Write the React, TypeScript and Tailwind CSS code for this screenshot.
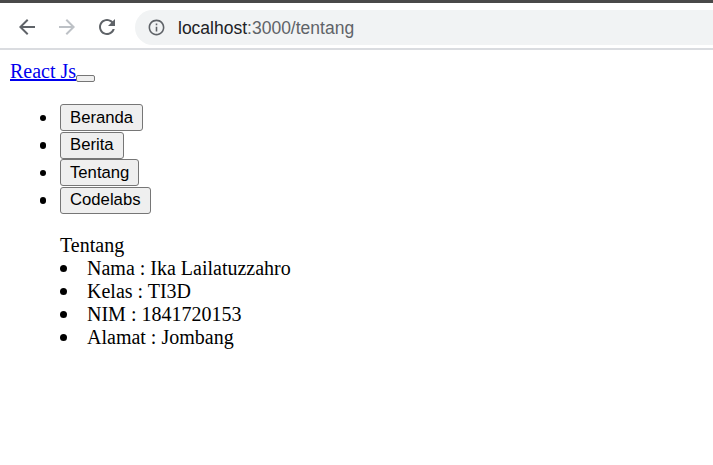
import React from "react";

const NAV = ["Beranda", "Berita", "Tentang", "Codelabs"];

const BIODATA = [
  "Nama : Ika Lailatuzzahro",
  "Kelas : TI3D",
  "NIM : 1841720153",
  "Alamat : Jombang",
];

function Icon({ d, className }: { d: string; className?: string }) {
  return (
    <svg viewBox="0 0 24 24" className={className} fill="currentColor">
      <path d={d} />
    </svg>
  );
}

function BrowserBar() {
  return (
    <div className="bg-white">
      <div className="h-[3px] bg-[#494949]" />
      <div className="h-[45px] flex items-center">
        <div className="flex items-center gap-4 pl-[15px] pr-4 pt-[2px]">
          <Icon
            className="w-6 h-6 text-[#5f6368]"
            d="M20 11H7.83l5.59-5.59L12 4l-8 8 8 8 1.41-1.41L7.83 13H20v-2z"
          />
          <Icon
            className="w-6 h-6 text-[#bdc1c6]"
            d="M12 4l-1.41 1.41L16.17 11H4v2h12.17l-5.58 5.59L12 20l8-8z"
          />
          <Icon
            className="w-6 h-6 text-[#5f6368]"
            d="M17.65 6.35C16.2 4.9 14.21 4 12 4c-4.42 0-7.99 3.58-7.99 8s3.57 8 7.99 8c3.73 0 6.84-2.55 7.73-6h-2.08c-.82 2.33-3.04 4-5.65 4-3.31 0-6-2.69-6-6s2.69-6 6-6c1.66 0 3.14.69 4.22 1.78L13 11h7V4l-2.35 2.35z"
          />
        </div>
        <div className="flex-1 h-[35px] mt-[3px] -mr-6 rounded-full bg-[#f1f3f4] flex items-center pl-3">
          <Icon
            className="w-[19px] h-[19px] text-[#5f6368]"
            d="M11 7h2v2h-2zm0 4h2v6h-2zm1-9C6.48 2 2 6.48 2 12s4.48 10 10 10 10-4.48 10-10S17.52 2 12 2zm0 18c-4.41 0-8-3.59-8-8s3.59-8 8-8 8 3.59 8 8-3.59 8-8 8z"
          />
          <span className="ml-[12px] mt-[2px] text-[17.5px] leading-[22px] font-['Liberation_Sans',Arial,sans-serif] text-[#202124]">
            localhost<span className="text-[#5f6368]">:3000/tentang</span>
          </span>
        </div>
      </div>
      <div className="h-[2px] bg-[#dadce0]" />
    </div>
  );
}

function Bullet() {
  return <span className="w-[6.5px] h-[6.5px] rounded-full bg-black shrink-0" />;
}

export default function App() {
  return (
    <div className="w-[713px] h-[465px] bg-white overflow-hidden font-['Liberation_Serif','Times_New_Roman',serif] text-[20px] leading-[23px] text-black">
      <BrowserBar />

      <div className="px-[10px] pt-[10px]">
        {/* Navbar brand + toggler */}
        <div className="flex h-[23px]">
          <a href="#" className="text-[#0000ee] underline">
            React Js
          </a>
          <button className="self-end mb-[1px] w-[19px] h-[7px] border border-[#767676] bg-[#efefef] rounded-[2px]" />
        </div>

        {/* Menu */}
        <ul className="mt-[21px] mb-[20px]">
          {NAV.map((item) => (
            <li key={item} className="flex items-center h-[27.5px]">
              <span className="w-[50px] flex justify-end pr-[14px]">
                <Bullet />
              </span>
              <button className="h-[27px] px-[9px] border-[1.25px] border-[#767676] bg-[#efefef] rounded-[3px] text-[16.7px] leading-[20px] font-['Liberation_Sans',Arial,sans-serif]">
                {item}
              </button>
            </li>
          ))}
        </ul>

        {/* Content */}
        <div className="pl-[50px]">
          <p>Tentang</p>
          <ul>
            {BIODATA.map((row) => (
              <li key={row} className="flex items-center h-[23px]">
                <span className="w-[27px] flex">
                  <Bullet />
                </span>
                <span>{row}</span>
              </li>
            ))}
          </ul>
        </div>
      </div>
    </div>
  );
}
